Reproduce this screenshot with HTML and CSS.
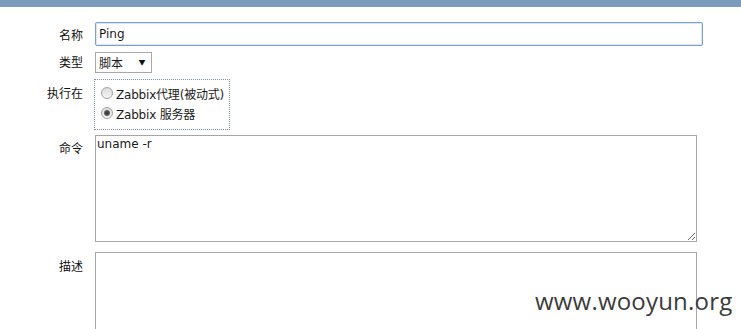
FILE: index.html
```html
<!DOCTYPE html>
<html lang="zh-CN">
    <head>
        <title>脚本</title>
        <meta charset="utf-8">
        <link rel="stylesheet" href="styles.css">
    </head>

    <body>
    	<div class="topbar"></div>
    	<div class="form">
    		<div class="row row-name">
    			<label class="lbl">名称</label>
    			<input class="name" type="text" value="Ping">
    		</div>
    		<div class="row row-type">
    			<label class="lbl">类型</label>
    			<div class="select">脚本<span class="arrow">▼</span></div>
    		</div>
    		<div class="row row-exec">
    			<label class="lbl">执行在</label>
    			<div class="radios">
    				<div class="radio"><span class="dot"></span>Zabbix代理(被动式)</div>
    				<div class="radio"><span class="dot on"></span>Zabbix 服务器</div>
    			</div>
    		</div>
    		<div class="row row-cmd">
    			<label class="lbl">命令</label>
    			<textarea class="area">uname -r</textarea>
    		</div>
    		<div class="row row-desc">
    			<label class="lbl">描述</label>
    			<textarea class="area"></textarea>
    		</div>
    	</div>
    	<div class="mark">www.wooyun.org</div>
    </body>
</html>
```

FILE: styles.css
```css
* {
	box-sizing: border-box;
	margin: 0;
}
body {
	background-color: #fff;
	font-family: "DejaVu Sans", "Noto Sans CJK SC", sans-serif;
	font-size: 12px;
	color: #1a1a1a;
	overflow: hidden;
	height: 329px;
	position: relative;
}
.topbar {
	height: 7px;
	background-color: #7b9bbe;
}
.form {
	padding-top: 15px;
	display: flex;
	flex-direction: column;
}
.row {
	display: flex;
	align-items: flex-start;
}
.lbl {
	width: 83px;
	margin-right: 12px;
	text-align: right;
	font-family: "Noto Sans CJK SC", sans-serif;
	font-size: 12px;
	line-height: 16px;
	color: #111;
}
.row-name .lbl { padding-top: 5px; }
.row-type { margin-top: 6px; }
.row-type .lbl { padding-top: 2px; }
.row-exec { margin-top: 6px; }
.row-exec .lbl { padding-top: 6px; margin-right: 11px; }
.row-cmd { margin-top: 5px; }
.row-cmd .lbl { padding-top: 5px; }
.row-desc { margin-top: 10px; }
.row-desc .lbl { padding-top: 6px; }

.name {
	width: 608px;
	height: 24px;
	border: 1px solid #7b9fd4;
	box-shadow: inset 0 0 0 1px #dbe6f5;
	border-radius: 2px;
	padding: 0 3px;
	font-family: "DejaVu Sans", sans-serif;
	font-size: 12px;
	color: #1a1a1a;
	outline: none;
}
.select {
	width: 57px;
	height: 21px;
	border: 1px solid #a9a9a9;
	padding: 0 0 0 3px;
	font-family: "Noto Sans CJK SC", sans-serif;
	font-size: 12px;
	line-height: 19px;
	display: flex;
	justify-content: space-between;
}
.arrow {
	font-size: 7px;
	width: 18px;
	text-align: center;
	color: #111;
}
.radios {
	width: 136px;
	border: 1px dotted #7d8fa8;
	padding: 3px 2px 6px;
}
.radio {
	height: 20px;
	display: flex;
	align-items: center;
	white-space: nowrap;
	font-family: "DejaVu Sans", "Noto Sans CJK SC", sans-serif;
	font-size: 12px;
	letter-spacing: -0.2px;
	color: #1a1a1a;
}
.dot {
	flex: none;
	width: 12px;
	height: 12px;
	border-radius: 50%;
	border: 1px solid #a2a2a2;
	background: linear-gradient(#dcdcdc, #f6f6f6);
	margin: 0 3px 0 4px;
	position: relative;
}
.dot.on::after {
	content: "";
	position: absolute;
	left: 2px;
	top: 2px;
	width: 6px;
	height: 6px;
	border-radius: 50%;
	background: radial-gradient(#333, #777);
}
.area {
	width: 602px;
	height: 107px;
	border: 1px solid #a6a6a6;
	padding: 1px 1px;
	font-family: "DejaVu Sans", sans-serif;
	font-size: 12px;
	color: #1a1a1a;
	resize: both;
	outline: none;
}
.mark {
	position: absolute;
	left: 535px;
	top: 284px;
	font-family: "Open Sans", sans-serif;
	font-size: 24px;
	letter-spacing: 0.2px;
	color: #3c3c3c;
}
```
